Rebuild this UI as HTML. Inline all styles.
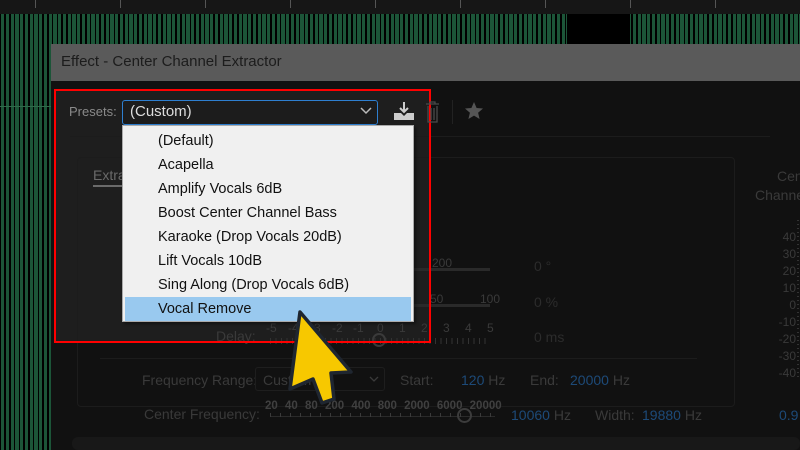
<!DOCTYPE html>
<html><head><meta charset="utf-8"><style>
*{margin:0;padding:0;box-sizing:border-box}
html,body{background:#111}
body{width:800px;height:450px;overflow:hidden;font-family:"Liberation Sans",sans-serif;position:relative}
.a{position:absolute;white-space:nowrap}
.wave{background-color:#1c5538;background-image:repeating-linear-gradient(90deg,#000 0 1px,transparent 1px 4px,#000 4px 6px,transparent 6px 9px,#000 9px 11px,transparent 11px 14px,#000 14px 15px,transparent 15px 19px);}
.g{color:#3a3a3a;font-size:13px}
.b{color:#1d4a78;font-size:13px}
.menu div{height:24px;line-height:24px;padding-left:35px;font-size:14.5px;color:#111}
</style></head><body>
<div class="a" style="left:0;top:0;width:800px;height:14px;background:#161616"></div>
<div class="a" style="left:0;top:0;width:800px;height:8px;background:repeating-linear-gradient(90deg,transparent 0 35px,#555 35px 36px,transparent 36px 85px)"></div>
<div class="a wave" style="left:0;top:14px;width:800px;height:30px"></div>
<div class="a" style="left:567px;top:14px;width:63px;height:30px;background:#000"></div>
<div class="a wave" style="left:0;top:44px;width:51px;height:406px"></div>
<div class="a" style="left:0;top:106px;width:51px;height:1px;background:#2f6a4a"></div>
<!-- dialog -->
<div class="a" style="left:51px;top:44px;width:749px;height:37px;background:#5a5a5a"></div>
<div class="a" style="left:61px;top:53px;font-size:15px;color:#1c1c1c">Effect - Center Channel Extractor</div>
<div class="a" style="left:51px;top:81px;width:749px;height:369px;background:#111"></div>
<div class="a" style="left:54px;top:89px;width:376px;height:253px;background:#1e1e1e"></div>
<div class="a" style="left:70px;top:136px;width:700px;height:1px;background:#1c1c1c"></div>
<div class="a" style="left:77px;top:157px;width:658px;height:250px;border:1px solid #1c1c1c;border-radius:4px"></div>
<div class="a" style="left:72px;top:437px;width:728px;height:13px;background:#181818;border-radius:6px"></div>
<div class="a" style="left:93px;top:167px;font-size:14px;color:#6a6a6a">Extraction</div>
<div class="a" style="left:93px;top:185px;width:40px;height:2px;background:#6a6a6a"></div>
<!-- faded middle -->
<div class="a g" style="left:432px;top:256px;font-size:12px">200</div>
<div class="a" style="left:400px;top:268px;width:90px;height:3px;background:#2a2a2a"></div>
<div class="a g" style="left:430px;top:292px;font-size:12px">50</div>
<div class="a g" style="left:480px;top:292px;font-size:12px">100</div>
<div class="a" style="left:400px;top:304px;width:90px;height:3px;background:#2a2a2a"></div>
<div class="a g" style="left:266px;top:321px;font-size:12px">-5</div>
<div class="a g" style="left:288px;top:321px;font-size:12px">-4</div>
<div class="a g" style="left:310px;top:321px;font-size:12px">-3</div>
<div class="a g" style="left:332px;top:321px;font-size:12px">-2</div>
<div class="a g" style="left:353px;top:321px;font-size:12px">-1</div>
<div class="a g" style="left:377px;top:321px;font-size:12px">0</div>
<div class="a g" style="left:399px;top:321px;font-size:12px">1</div>
<div class="a g" style="left:421px;top:321px;font-size:12px">2</div>
<div class="a g" style="left:443px;top:321px;font-size:12px">3</div>
<div class="a g" style="left:465px;top:321px;font-size:12px">4</div>
<div class="a g" style="left:487px;top:321px;font-size:12px">5</div>
<div class="a" style="left:270px;top:338px;width:220px;height:6px;background:repeating-linear-gradient(90deg,#333 0 1px,transparent 1px 5.5px)"></div>
<div class="a" style="left:372px;top:333px;width:14px;height:14px;border:2px solid #3a3a3a;border-radius:50%"></div>
<div class="a g" style="left:216px;top:328px;font-size:14px">Delay:</div>
<div class="a g" style="left:534px;top:258px;font-size:14px;color:#2c2c2c">0 °</div>
<div class="a g" style="left:534px;top:294px;font-size:14px;color:#2c2c2c">0 %</div>
<div class="a g" style="left:534px;top:329px;font-size:14px;color:#2c2c2c">0 ms</div>
<div class="a" style="left:100px;top:358px;width:597px;height:1px;background:#1c1c1c"></div>
<!-- bottom controls -->
<div class="a g" style="left:142px;top:372px;font-size:14px">Frequency Range:</div>
<div class="a" style="left:255px;top:367px;width:130px;height:24px;border:1px solid #1e1e1e;border-radius:3px"></div>
<div class="a g" style="left:263px;top:372px;font-size:14px">Custom</div>
<svg class="a" style="left:369px;top:376px" width="10" height="7"><path d="M1 1l4 4 4-4" fill="none" stroke="#3a3a3a" stroke-width="1.3"/></svg>
<div class="a g" style="left:400px;top:372px;font-size:14px">Start:</div>
<div class="a b" style="left:461px;top:372px;font-size:14px">120 <span style="color:#3a3a3a">Hz</span></div>
<div class="a g" style="left:530px;top:372px;font-size:14px">End:</div>
<div class="a b" style="left:570px;top:372px;font-size:14px">20000 <span style="color:#3a3a3a">Hz</span></div>
<div class="a g" style="left:144px;top:406px;font-size:14px">Center Frequency:</div>
<div class="a g" style="left:265px;top:400px;font-size:11.5px;color:#404040;font-weight:bold;word-spacing:4px">20 40 80 200 400 800 2000 6000 20000</div>
<div class="a" style="left:270px;top:416px;width:225px;height:1px;background:#2a2a2a"></div>
<div class="a" style="left:270px;top:413px;width:225px;height:4px;background:repeating-linear-gradient(90deg,#3a3a3a 0 1px,transparent 1px 10px)"></div>
<div class="a" style="left:457px;top:408px;width:15px;height:15px;border:2px solid #3c3c3c;border-radius:50%"></div>
<div class="a b" style="left:511px;top:407px;font-size:14px">10060 <span style="color:#3a3a3a">Hz</span></div>
<div class="a g" style="left:595px;top:407px;font-size:14px">Width:</div>
<div class="a b" style="left:642px;top:407px;font-size:14px">19880 <span style="color:#3a3a3a">Hz</span></div>
<div class="a b" style="left:779px;top:407px;font-size:14px">0.9</div>
<!-- right -->
<div class="a g" style="left:777px;top:168px;font-size:14px">Center</div>
<div class="a g" style="left:755px;top:187px;font-size:14px">Channel</div>
<div class="a" style="left:770px;top:229px;width:26px;font-size:12px;color:#3a3a3a;text-align:right;line-height:17px">40<br>30<br>20<br>10<br>0<br>-10<br>-20<br>-30<br>-40</div>
<div class="a" style="left:797px;top:220px;width:2px;height:160px;background:repeating-linear-gradient(#333 0 1px,transparent 1px 4px)"></div>
<!-- red frame -->
<div class="a" style="left:54px;top:89px;width:377px;height:254px;border:2px solid #f00"></div>
<!-- presets -->
<div class="a" style="left:69px;top:104px;font-size:13px;color:#8a8a8a">Presets:</div>
<div class="a" style="left:122px;top:100px;width:256px;height:25px;border:1px solid #2e7fd0;border-radius:3px;background:#1c1c1c"></div>
<div class="a" style="left:130px;top:103px;font-size:15px;color:#ddd">(Custom)</div>
<svg class="a" style="left:360px;top:107px" width="12" height="8"><path d="M1 1l5 5 5-5" fill="none" stroke="#bbb" stroke-width="1.5"/></svg>
<svg class="a" style="left:393px;top:101px" width="22" height="20"><path d="M11 1v10M7 7l4 4 4-4" fill="none" stroke="#ccc" stroke-width="2"/><path d="M1 12h7l3 3 3-3h7v7H1z" fill="#ccc"/></svg>
<svg class="a" style="left:425px;top:100px" width="16" height="24"><path d="M1 4h13M5 4V2h5v2M3 6v16h9V6M6 8v12M9 8v12" fill="none" stroke="#4a4a4a" stroke-width="1.3"/></svg>
<div class="a" style="left:452px;top:100px;width:1px;height:24px;background:#222"></div>
<svg class="a" style="left:464px;top:101px" width="20" height="20"><path d="M10 1l2.6 6 6.4.5-4.9 4.2 1.5 6.3L10 14.6 4.4 18l1.5-6.3L1 7.5l6.4-.5z" fill="#555"/></svg>
<!-- menu -->
<div class="a menu" style="left:122px;top:125px;width:292px;height:197px;background:#f0f0f0;border:1px solid #aaa;box-shadow:2px 2px 3px rgba(0,0,0,.4);padding-top:3px">
<div>(Default)</div><div>Acapella</div><div>Amplify Vocals 6dB</div><div>Boost Center Channel Bass</div><div>Karaoke (Drop Vocals 20dB)</div><div>Lift Vocals 10dB</div><div>Sing Along (Drop Vocals 6dB)</div>
<div style="background:#99c9ef;margin:0 2px;padding-left:33px">Vocal Remove</div></div>
<!-- cursor -->
<svg class="a" style="left:280px;top:300px" width="80" height="110"><path d="M20 12L71 72L51 73L54 99L42 103L33 79L10 89Z" fill="#f7c800" stroke="#1f2630" stroke-width="3.5" stroke-linejoin="round"/></svg>
</body></html>
